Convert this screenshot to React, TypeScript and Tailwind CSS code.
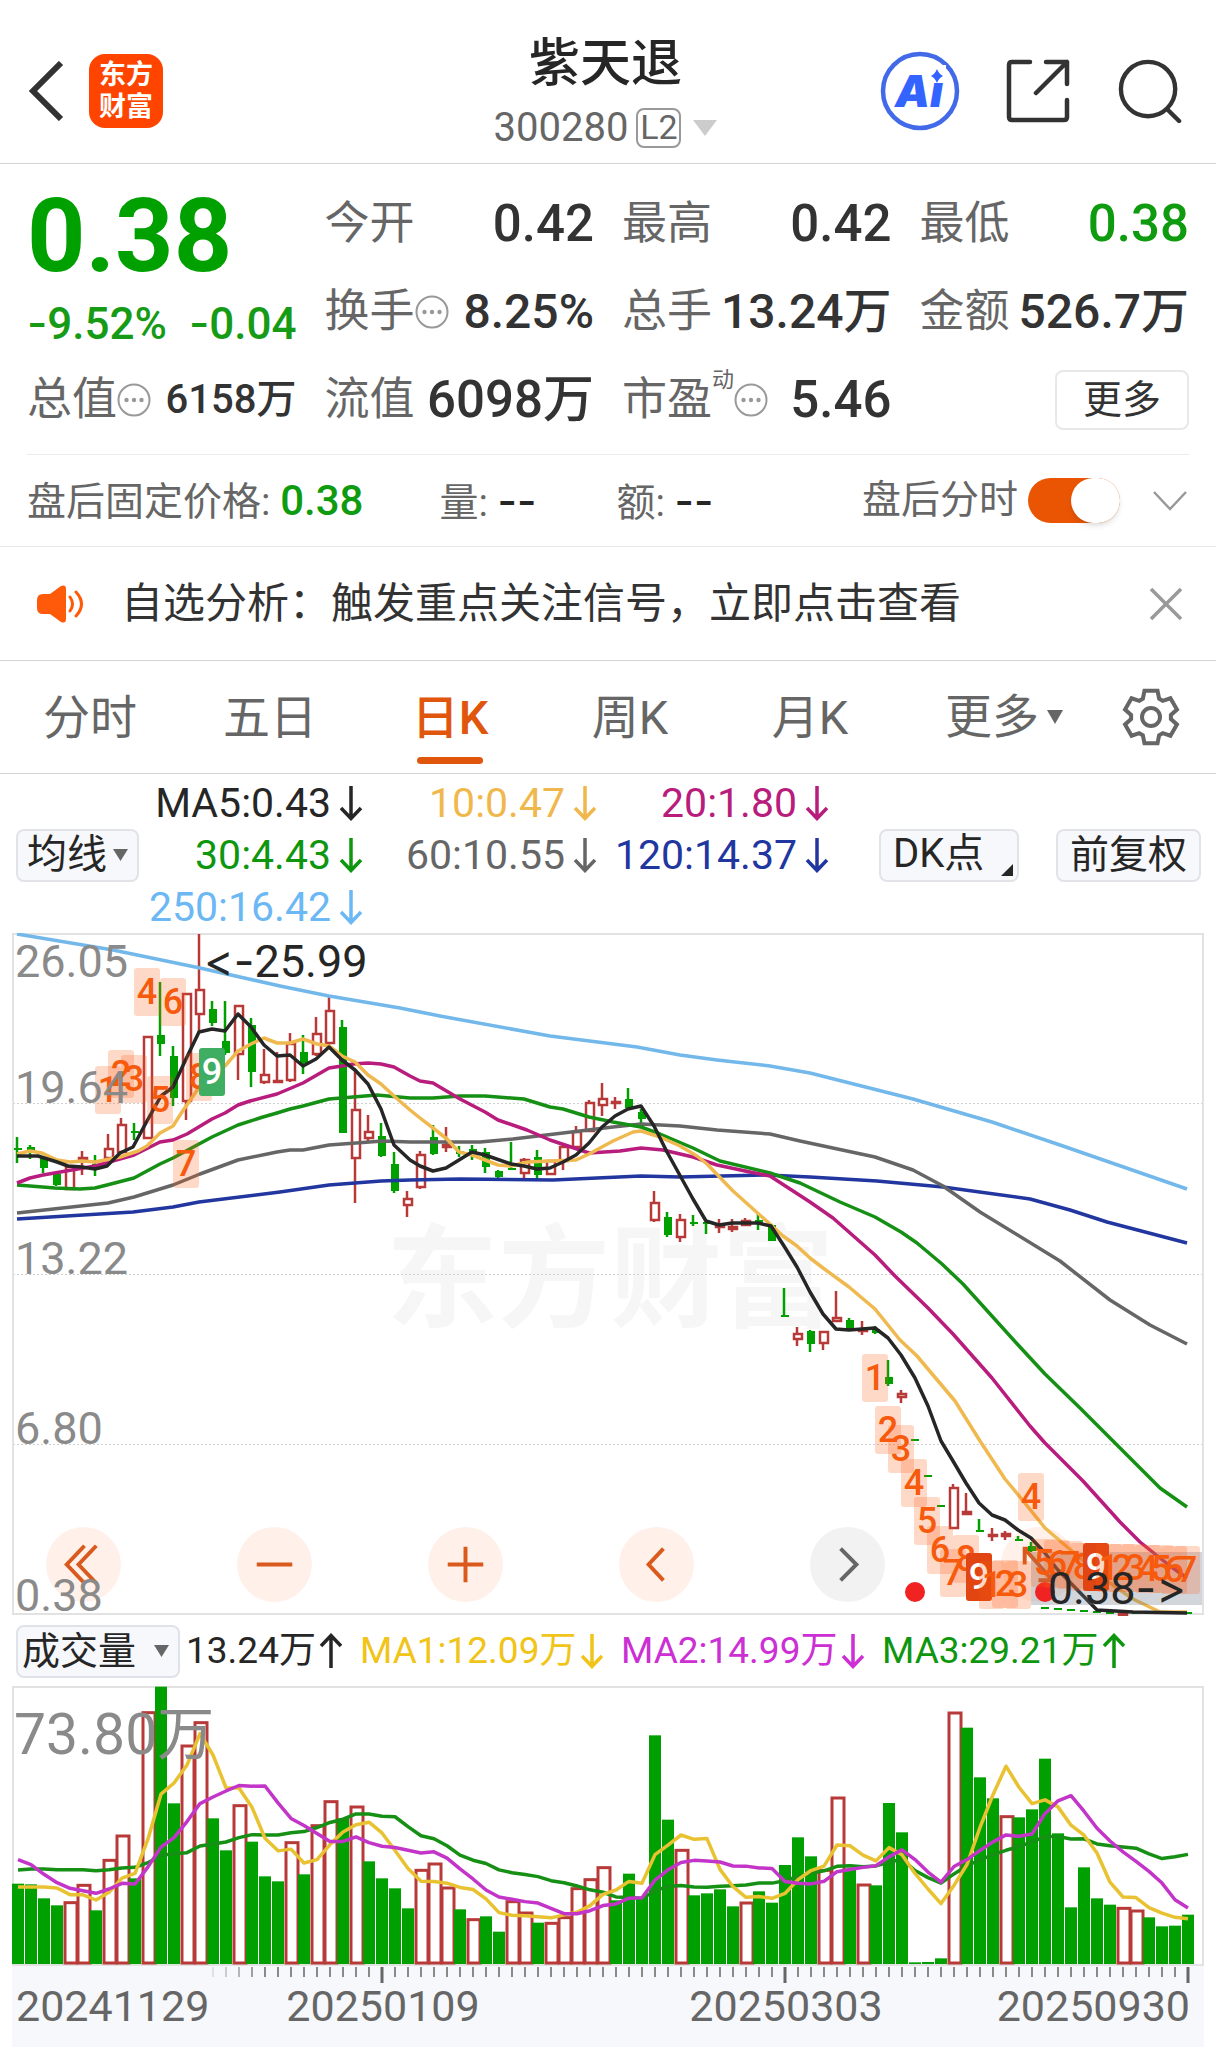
import { useState } from "react";

type Candle = [up: number, high: number, top: number, bottom: number, low: number];

// one row per trading day, y values on the chart's own scale
const candles: Candle[] = [
  [0, 204, 215, 217, 230], [0, 212, 214, 220, 226], [0, 225, 225, 235, 240], [0, 241, 241, 252, 253],
  [1, 233, 233, 257, 257], [1, 218, 224, 227, 242], [0, 222, 231, 233, 243], [1, 201, 215, 226, 227],
  [1, 185, 191, 220, 221], [0, 190, 198, 200, 207], [1, 103, 103, 206, 206], [0, 49, 102, 111, 123],
  [0, 113, 123, 165, 173], [1, 60, 60, 169, 187], [1, 1, 56, 82, 99], [0, 68, 76, 90, 93],
  [0, 68, 108, 120, 122], [1, 72, 72, 122, 147], [0, 85, 92, 139, 154], [1, 116, 141, 150, 151],
  [1, 119, 147, 149, 149], [1, 100, 110, 148, 149], [0, 102, 119, 130, 141], [1, 84, 100, 122, 123],
  [1, 64, 77, 111, 112], [0, 87, 94, 200, 200], [1, 136, 176, 226, 270], [1, 182, 198, 206, 208],
  [0, 190, 203, 223, 224], [0, 219, 231, 258, 260], [1, 258, 265, 273, 284], [1, 218, 221, 255, 256],
  [0, 192, 204, 221, 222], [1, 194, 211, 215, 219], [0, 213, 218, 221, 224], [0, 212, 216, 220, 227],
  [0, 215, 219, 234, 240], [0, 237, 238, 244, 246], [0, 209, 235, 237, 237], [1, 225, 226, 241, 245],
  [0, 217, 224, 242, 246], [1, 227, 227, 242, 242], [1, 212, 213, 229, 237], [1, 193, 198, 215, 216],
  [1, 167, 169, 199, 199], [1, 150, 165, 173, 183], [1, 164, 168, 171, 176], [0, 155, 166, 175, 176],
  [0, 176, 179, 186, 190], [1, 258, 269, 288, 289], [0, 279, 284, 302, 304], [1, 281, 286, 305, 309],
  [0, 282, 289, 291, 293], [0, 289, 289, 291, 301], [1, 286, 292, 295, 300], [1, 286, 293, 297, 299],
  [1, 285, 287, 293, 293], [0, 281, 287, 289, 297], [0, 292, 292, 308, 308], [0, 355, 382, 384, 384],
  [1, 394, 400, 407, 413], [0, 397, 398, 411, 419], [1, 398, 398, 411, 417], [1, 358, 384, 389, 389],
  [0, 385, 387, 396, 397], [1, 388, 396, 398, 402], [0, 393, 396, 400, 401], [0, 427, 444, 451, 453],
  [1, 457, 460, 465, 470], [0, 506, 506, 508, 508], [0, 542, 542, 544, 544], [0, 572, 572, 574, 574],
  [1, 551, 554, 596, 596], [1, 560, 578, 582, 582], [0, 586, 597, 599, 599], [1, 595, 601, 603, 608],
  [1, 598, 600, 604, 607], [0, 603, 606, 608, 608], [0, 609, 613, 618, 619], [0, 674, 674, 676, 676],
  [0, 675, 675, 677, 677], [0, 676, 676, 678, 678], [0, 677, 677, 679, 679], [0, 678, 678, 680, 680],
  [0, 679, 679, 681, 681], [1, 680, 680, 681, 681], [0, 679, 679, 681, 681], [0, 679, 679, 681, 681],
  [0, 679, 679, 681, 681], [0, 679, 679, 681, 681], [0, 679, 679, 681, 681],
];

const priceLines = [
  {
    color: "#73b8ea",
    points:
      "17,1 113,17 200,35 280,53 329,63 400,75 440,83 550,103 637,114 680,122 717,127 770,133 810,140 913,166 992,189 1060,212 1187,256",
  },
  {
    color: "#22369f",
    points:
      "17,286 133,279 173,274 199,269 280,259 329,252 381,248 410,247 460,246 553,247 641,243 680,244 767,242 810,244 877,248 943,254 1030,266 1070,277 1107,289 1187,310",
  },
  {
    color: "#666666",
    points:
      "17,280 108,270 134,264 173,252 200,241 238,227 277,219 290,217 303,217 329,212 383,208 410,209 480,209 513,206 613,194 641,191 680,193 717,197 770,201 800,208 875,224 913,237 943,253 980,279 1060,328 1110,367 1150,392 1187,411",
  },
  {
    color: "#159015",
    points:
      "17,252 30,253 55,255 80,256 95,255 107,252 134,245 160,231 173,225 212,204 225,198 238,192 263,184 277,180 290,176 303,173 329,166 377,162 410,165 433,165 460,163 485,163 524,166 550,174 563,176 589,184 613,189 641,194 660,201 693,215 720,228 770,240 800,250 840,269 875,284 901,299 917,310 942,331 963,351 1020,414 1045,441 1080,475 1160,555 1187,574",
  },
  {
    color: "#b81c7c",
    points:
      "17,250 30,245 43,242 95,233 134,222 160,209 173,207 187,201 212,186 225,180 238,172 250,168 277,161 303,150 329,135 342,133 353,131 368,130 381,131 394,134 410,143 420,148 433,150 460,166 485,179 498,187 527,197 550,207 589,220 620,218 641,215 663,217 693,224 717,232 750,239 770,243 810,269 833,285 875,322 895,343 928,375 953,401 992,445 1030,493 1045,510 1083,548 1120,589 1140,609 1170,633 1187,645",
  },
  {
    color: "#efb94f",
    points:
      "17,221 30,218 42,220 57,227 70,229 82,228 95,229 120,224 138,218 147,213 160,200 173,193 182,179 200,153 225,133 238,118 251,111 264,105 277,110 290,110 303,106 317,111 329,113 342,123 355,129 368,142 381,151 394,163 410,177 420,185 433,195 447,206 459,219 472,222 485,227 498,232 511,233 528,229 550,228 576,227 589,221 613,208 633,199 641,198 660,204 680,213 697,223 707,231 733,258 771,292 783,303 797,313 810,325 823,335 849,354 875,376 900,407 917,423 933,442 955,468 980,508 1005,546 1020,564 1045,595 1073,619 1110,650 1133,666 1160,679 1187,679",
  },
  {
    color: "#262626",
    points:
      "17,223 38,223 57,229 68,233 82,234 95,236 107,233 120,220 133,214 147,188 161,163 173,154 186,126 199,99 212,96 225,98 238,81 251,94 264,112 277,123 290,122 303,133 316,126 329,114 342,127 355,137 368,151 381,176 394,212 410,227 420,233 433,238 446,235 472,219 485,222 511,231 524,233 537,236 550,235 563,229 576,222 589,210 602,194 615,183 628,176 641,173 654,193 667,219 693,266 706,288 719,292 732,290 758,290 771,293 784,313 797,334 810,359 823,381 836,396 849,397 875,395 888,405 901,422 915,445 928,473 941,508 953,528 966,550 979,570 992,582 1005,587 1018,597 1031,605 1045,620 1057,636 1097,677 1133,679 1187,680",
  },
];

// nine-turn signals: digit, x, y, optional solid fill
const signals: [string, number, number, string?][] = [
  ["1", 95, 133], ["2", 108, 117], ["3", 121, 122], ["4", 134, 35], ["5", 147, 143],
  ["6", 160, 45], ["7", 173, 207], ["8", 186, 120], ["9", 199, 115, "#3fae62"],
  ["1", 862, 421], ["2", 875, 473], ["3", 888, 492], ["4", 901, 526], ["5", 914, 564],
  ["6", 927, 593], ["7", 940, 616], ["8", 953, 602], ["9", 966, 620, "#e04512"],
  ["1", 979, 628], ["2", 992, 627], ["3", 1005, 628], ["4", 1018, 540],
  ["5", 1031, 606], ["6", 1044, 607], ["7", 1057, 608], ["8", 1070, 610], ["9", 1083, 610, "#e04512"],
  ["1", 1096, 611], ["2", 1109, 611], ["3", 1122, 611], ["4", 1135, 612],
  ["5", 1148, 612], ["6", 1161, 613], ["7", 1174, 613],
];

// positive: up day, negative: down day
const volumes = [
  -241, -239, -197, -176, 187, 239, -161, 314, 387, -257, 757, -832, -482, 657, 727, -437, -341, 478, -367, -263,
  -248, 367, -269, 418, 490, -437, 474, -308, -257, -227, -167, 284, 303, 231, -164, 136, -143, -97, 190, 156,
  -124, 125, 142, 229, 256, 292, -191, -271, -201, -686, -433, 344, -206, -212, -224, -173, 186, -218, -184, -297,
  -380, -323, 284, 501, -286, 240, -236, -483, -395, -5, -6, -17, 756, -709, -560, -497, 445, -440, -464, -616,
  -392, -170, -290, -197, -178, 170, 162, -140, -113, -115, -148,
];

// averages of the first days need data from before the visible range
const volumeLines = [
  {
    color: "#159015",
    days: 20,
    lead: [282, 285, 285, 283, 283, 283, 280, 283, 288, 290, 304, 326, 331, 334, 354, 360, 366, 379, 388],
  },
  { color: "#e8c230", days: 5, lead: [231, 231, 231, 228] },
  { color: "#c335c8", days: 10, lead: [313, 298, 269, 244, 227, 220, 212, 225, 242] },
];

function averagePoints(days: number, lead: number[]) {
  return volumes
    .map((_, i) => {
      let avg = lead[i];
      if (i >= days - 1) {
        avg = volumes.slice(i - days + 1, i + 1).reduce((sum, v) => sum + Math.abs(v), 0) / days;
      }
      return `${18 + i * 13},${278 - avg / 3}`;
    })
    .join(" ");
}

function gearPoints() {
  const points: string[] = [];
  for (let k = 0; k < 6; k++) {
    for (const [r, offset] of [[20, -24], [27, -14], [27, 14], [20, 24]]) {
      const a = ((k * 60 + offset - 90) * Math.PI) / 180;
      points.push(`${29 + r * Math.cos(a)},${29 + r * Math.sin(a)}`);
    }
  }
  return points.join(" ");
}

function Arrow({ up = false }: { up?: boolean }) {
  return (
    <svg viewBox="0 0 24 36" className="w-6 h-9 shrink-0" fill="none" stroke="currentColor" strokeWidth="3.5">
      {up ? <path d="M12 35V3M2 13L12 2.5L22 13" /> : <path d="M12 1V33M2 23L12 33.5L22 23" />}
    </svg>
  );
}

function Info() {
  return (
    <svg viewBox="0 0 34 34" className="w-[34px] h-[34px] shrink-0" fill="none" stroke="#999" strokeWidth="2">
      <circle cx="17" cy="17" r="15.5" />
      <g fill="#999" stroke="none">
        <circle cx="9.5" cy="17" r="2.2" />
        <circle cx="17" cy="17" r="2.2" />
        <circle cx="24.5" cy="17" r="2.2" />
      </g>
    </svg>
  );
}

function Triangle({ className }: { className: string }) {
  return (
    <svg viewBox="0 0 16 14" className={className} fill="currentColor" preserveAspectRatio="none">
      <path d="M0 0H16L8 14Z" />
    </svg>
  );
}

function Header() {
  return (
    <header className="grid grid-cols-[1fr_auto_1fr] items-center h-[164px] border-b border-[#d4d4d4] pl-[27px] pr-8">
      <div className="flex items-center gap-6 pt-[18px]">
        <button aria-label="返回">
          <svg viewBox="0 0 38 60" className="w-[38px] h-15" fill="none" stroke="#333" strokeWidth="6">
            <path d="M34 2L6 30L34 58" />
          </svg>
        </button>
        <a
          href="#home"
          className="flex flex-col items-center justify-center w-[74px] h-[74px] rounded-2xl bg-[#ff4400] text-white text-[27px] leading-8 font-bold"
        >
          <span>东方</span>
          <span>财富</span>
        </a>
      </div>
      <div className="flex flex-col items-center pt-7">
        <h1 className="text-[51px] leading-[64px] font-medium text-[#262626]">紫天退</h1>
        <button className="flex items-center h-16 text-[40px] text-[#666]">
          300280
          <span className="flex items-center justify-center w-[45px] h-10 ml-2 border-2 border-[#999] rounded-lg text-[34px]">
            L2
          </span>
          <Triangle className="w-6 h-4 ml-3 text-[#ccc]" />
        </button>
      </div>
      <div className="flex items-center justify-end gap-[46px] pt-[18px]">
        <button aria-label="AI助手">
          <svg viewBox="0 0 80 80" className="w-20 h-20">
            <circle cx="40" cy="40" r="37" fill="none" stroke="#4169e8" strokeWidth="4.5" />
            <text
              x="15"
              y="56"
              fontFamily="Inter, sans-serif"
              fontSize="44"
              fontWeight="900"
              fontStyle="italic"
              fill="#3464ff"
            >
              Ai
            </text>
            <path d="M46 14H66V32H46Z" fill="#fff" />
            <path d="M57 18Q59 23 63 25Q59 27 57 32Q55 27 51 25Q55 23 57 18Z" fill="#3464ff" />
          </svg>
        </button>
        <button aria-label="分享">
          <svg
            viewBox="0 0 64 64"
            className="w-16 h-16"
            fill="none"
            stroke="#333"
            strokeWidth="4.5"
            strokeLinecap="round"
            strokeLinejoin="round"
          >
            <path d="M24 3H6Q3 3 3 6V58Q3 61 6 61H58Q61 61 61 58V41" />
            <path d="M40 3H61V25M61 3L30 34" />
          </svg>
        </button>
        <button aria-label="搜索">
          <svg viewBox="0 0 68 66" className="w-[68px] h-16" fill="none" stroke="#333" strokeWidth="4.5" strokeLinecap="round">
            <circle cx="32" cy="31" r="28" />
            <path d="M52 52L64 64" />
          </svg>
        </button>
      </div>
    </header>
  );
}

function Cell({ label, value, size, color = "text-[#333]", info = false, sup = "" }: {
  label: string;
  value: string;
  size: string;
  color?: string;
  info?: boolean;
  sup?: string;
}) {
  return (
    <div className="flex items-center justify-between h-[88px] whitespace-nowrap">
      <dt className="flex items-center text-[45px] text-[#666]">
        {label}
        {sup && <sup className="text-[22px] -top-5">{sup}</sup>}
        {info && <Info />}
      </dt>
      <dd className={`font-medium ${size} ${color}`}>{value}</dd>
    </div>
  );
}

function Quote() {
  return (
    <section className="px-[27px]">
      <dl className="grid grid-cols-4 gap-x-7 pt-4 pb-[10px] border-b border-[#ececec]">
        <div className="row-span-2 text-[#00a000]">
          <dt className="sr-only">最新价</dt>
          <dd className="h-[112px] text-[102px] leading-[112px] font-bold">0.38</dd>
          <dd className="flex items-center justify-between h-[62px] text-[44px] font-medium text-[#159b15]">
            <span>
              <span className="font-['Inter']">-</span>9.52%
            </span>
            <span>
              <span className="font-['Inter']">-</span>0.04
            </span>
          </dd>
        </div>
        <Cell label="今开" value="0.42" size="text-[51px]" />
        <Cell label="最高" value="0.42" size="text-[51px]" />
        <Cell label="最低" value="0.38" size="text-[51px]" color="text-[#0f9b0f]" />
        <Cell label="换手" value="8.25%" size="text-[48px]" info />
        <Cell label="总手" value="13.24万" size="text-[48px]" />
        <Cell label="金额" value="526.7万" size="text-[48px]" />
        <Cell label="总值" value="6158万" size="text-[40px]" info />
        <Cell label="流值" value="6098万" size="text-[51px]" />
        <Cell label="市盈" value="5.46" size="text-[51px]" info sup="动" />
        <div className="flex items-center justify-end">
          <button className="w-[134px] h-[60px] border-2 border-[#e8e8e8] rounded-lg text-[39px] leading-none text-[#333]">
            更多
          </button>
        </div>
      </dl>
    </section>
  );
}

function AfterHours() {
  const [on, setOn] = useState(true);
  return (
    <section className="flex items-center h-[92px] pl-[27px] pr-[28px] border-b border-[#e8e8e8] text-[39px] text-[#666] whitespace-nowrap">
      <p>
        盘后固定价格: <span className="text-[42px] text-[#0f9b0f] font-medium">0.38</span>
      </p>
      <p className="ml-[76px]">
        量: <span className="font-['Inter'] text-[42px] font-medium text-[#262626]">--</span>
      </p>
      <p className="ml-[80px]">
        额: <span className="font-['Inter'] text-[42px] font-medium text-[#262626]">--</span>
      </p>
      <label className="flex items-center gap-[10px] ml-auto">
        盘后分时
        <input
          type="checkbox"
          role="switch"
          checked={on}
          onChange={() => setOn(!on)}
          className="appearance-none w-[92px] h-[45px] rounded-full bg-[#ccc] checked:bg-[#ea5504] before:block before:w-[49px] before:h-[45px] before:rounded-full before:bg-white before:shadow-md checked:before:ml-[43px]"
        />
      </label>
      <button aria-label="展开" className="ml-8">
        <svg viewBox="0 0 36 22" className="w-9 h-[22px]" fill="none" stroke="#999" strokeWidth="2.5">
          <path d="M2 2L18 19L34 2" />
        </svg>
      </button>
    </section>
  );
}

function Notice() {
  return (
    <section className="flex items-center h-[114px] pl-[37px] pr-[32px] border-b border-[#d4d4d4]">
      <svg viewBox="0 0 48 40" className="w-12 h-10 shrink-0">
        <path d="M6 10H13L24 2Q29 0 29 5V35Q29 40 24 38L13 30H6Q0 30 0 24V16Q0 10 6 10Z" fill="#ff5a0a" />
        <path
          d="M33 13Q38 20 33 27M39 8Q50 20 39 32"
          fill="none"
          stroke="#ff5a0a"
          strokeWidth="3"
          strokeLinecap="round"
        />
      </svg>
      <a href="#analysis" className="ml-9 text-[42px] text-[#333] whitespace-nowrap">
        自选分析：触发重点关注信号，立即点击查看
      </a>
      <button aria-label="关闭" className="ml-auto">
        <svg viewBox="0 0 36 36" className="w-9 h-9" fill="none" stroke="#999" strokeWidth="3.5">
          <path d="M3 3L33 33M33 3L3 33" />
        </svg>
      </button>
    </section>
  );
}

function Tabs() {
  const [active, setActive] = useState("日K");
  return (
    <nav className="flex items-center h-[113px] pr-[36px] border-b border-[#d4d4d4] text-[47px] text-[#666]">
      {["分时", "五日", "日K", "周K", "月K"].map((tab) => (
        <button
          key={tab}
          onClick={() => setActive(tab)}
          className={`flex flex-col items-center w-[180px] h-full pt-[21px] ${tab === active ? "text-[#e0560d] font-medium" : ""}`}
        >
          <span className="leading-[72px]">{tab}</span>
          {tab === active && <span className="w-[66px] h-[7px] mt-[3px] rounded-full bg-[#e0560d]" />}
        </button>
      ))}
      <button className="flex items-center ml-[45px] gap-2">
        更多
        <Triangle className="w-4 h-[14px]" />
      </button>
      <button aria-label="设置" className="ml-auto">
        <svg viewBox="0 0 58 58" className="w-[58px] h-[58px]" fill="none" stroke="#666" strokeWidth="4">
          <polygon points={gearPoints()} />
          <circle cx="29" cy="29" r="9" />
        </svg>
      </button>
    </nav>
  );
}

const averages = [
  { text: "MA5:0.43", color: "text-[#262626]" },
  { text: "10:0.47", color: "text-[#f0b84c]" },
  { text: "20:1.80", color: "text-[#b81c7c]" },
  { text: "30:4.43", color: "text-[#0f960f]" },
  { text: "60:10.55", color: "text-[#666]" },
  { text: "120:14.37", color: "text-[#22369f]" },
  { text: "250:16.42", color: "text-[#6cb8f5]" },
];

function AverageBar() {
  return (
    <section className="flex items-center h-[159px] pt-[3px] pl-4 pr-[15px]">
      <button className="flex items-center justify-center gap-[6px] w-[123px] h-[53px] border-2 border-[#e2e3e8] rounded-lg bg-[#f7f8fb] text-[40px] leading-none text-[#262626]">
        均线
        <Triangle className="w-[15px] h-3 text-[#666]" />
      </button>
      <ul className="grid grid-cols-[224px_234px_232px] text-[41px] leading-[52px]">
        {averages.map(({ text, color }) => (
          <li key={text} className={`flex items-center justify-end gap-2 ${color}`}>
            {text}
            <Arrow />
          </li>
        ))}
      </ul>
      <button className="flex items-end justify-between w-[140px] h-[53px] ml-[50px] pl-3 pr-1 pb-1 border-2 border-[#e2e3e8] rounded-lg bg-[#f7f8fb] text-[40px] leading-[45px] text-[#262626]">
        DK点
        <svg viewBox="0 0 12 12" className="w-3 h-3">
          <path d="M12 0V12H0Z" fill="#262626" />
        </svg>
      </button>
      <button className="w-[145px] h-[53px] ml-auto border-2 border-[#e2e3e8] rounded-lg bg-[#f7f8fb] text-[39px] leading-none text-[#262626]">
        前复权
      </button>
    </section>
  );
}

const chartButtons = [
  { label: "最早", icon: "M39 19L21 38L39 57M51 19L33 38L51 57" },
  { label: "缩小", icon: "M20 38H56" },
  { label: "放大", icon: "M20 38H56M38 20V56" },
  { label: "向左", icon: "M45 22L30 38L45 54" },
  { label: "向右", icon: "M31 22L47 38L31 54" },
  { label: "全屏", icon: "M24 38V22H38M24 22L52 54M38 54H52V40" },
];

function PriceChart() {
  return (
    <section className="relative">
      <div className="absolute left-[46px] bottom-[14px] flex gap-[116px]">
        {chartButtons.map(({ label, icon }) => (
          <button
            key={label}
            aria-label={label}
            className={label === "向右" ? "rounded-full bg-[#f2f2f2] text-[#666]" : "rounded-full bg-[#fff1ea] text-[#d95a1c]"}
          >
            <svg viewBox="0 0 76 76" className="w-[75px] h-[75px]" fill="none" stroke="currentColor" strokeWidth="4">
              <path d={icon} />
            </svg>
          </button>
        ))}
      </div>
      <svg viewBox="0 0 1216 683" className="relative block w-full h-auto pointer-events-none">
        <text x="386" y="386" fontSize="112" fontWeight="700" fill="#000" fillOpacity="0.035">
          东方财富
        </text>
        <g stroke="#cfcfcf" strokeDasharray="2 2">
          <path d="M13 170.5H1202M13 341.5H1202M13 511.5H1202" />
        </g>
        <rect x="13" y="1" width="1190" height="680" fill="none" stroke="#e2e2e2" strokeWidth="2" />

        {candles.map(([up, high, top, bottom, low], i) => {
          const x = 17 + i * 13;
          const color = up ? "#b83a38" : "#00a000";
          return (
            <g key={i} stroke={color} strokeWidth="2.5">
              <path d={`M${x} ${high}V${top}M${x} ${bottom}V${low}`} />
              {up ? (
                <rect x={x - 3} y={top + 1} width="8" height={Math.max(bottom - top - 2, 1)} fill="#fff" />
              ) : (
                <rect x={x - 3} y={top} width="8" height={bottom - top} fill={color} stroke="none" />
              )}
            </g>
          );
        })}

        {priceLines.map(({ color, points }) => (
          <polyline key={color} points={points} fill="none" stroke={color} strokeWidth="3.5" strokeLinejoin="round" />
        ))}

        <rect x="1031" y="619" width="171" height="53" fill="#6b7888" fillOpacity="0.3" />
        <circle cx="915" cy="659" r="10" fill="#f02222" />
        <circle cx="1045" cy="659" r="10" fill="#f02222" />

        {signals.map(([digit, x, y, fill], i) => (
          <g key={i}>
            <rect x={x} y={y} width="26" height="48" rx="3" fill={fill ?? "#ff5a10"} fillOpacity={fill ? 1 : 0.23} />
            <text
              x={x + 13}
              y={y + 36}
              fontSize="36"
              fontWeight="500"
              textAnchor="middle"
              fill={fill ? "#fff" : "#f65a0c"}
            >
              {digit}
            </text>
          </g>
        ))}

        <g fontSize="45" fill="#8a8a8a">
          <text x="15" y="44">26.05</text>
          <text x="15" y="170">19.64</text>
          <text x="15" y="341">13.22</text>
          <text x="15" y="511">6.80</text>
          <text x="15" y="678">0.38</text>
        </g>
        <g fontSize="45" fill="#262626" className="[font-variant-ligatures:none] [font-feature-settings:'calt'_0]">
          <text x="204" y="44">
            <tspan fontFamily="Inter">&lt;-</tspan>25.99
          </text>
          <text x="1186" y="671" textAnchor="end">
            0.38<tspan fontFamily="Inter">-&gt;</tspan>
          </text>
        </g>
      </svg>
    </section>
  );
}

const volumeStats = [
  { text: "13.24万", color: "text-[#262626]", up: true, width: "w-[157px]" },
  { text: "MA1:12.09万", color: "text-[#f0c419]", up: false, width: "w-[244px]" },
  { text: "MA2:14.99万", color: "text-[#cc2fd4]", up: false, width: "w-[244px]" },
  { text: "MA3:29.21万", color: "text-[#0f960f]", up: true, width: "w-[244px]" },
];

function VolumeBar() {
  return (
    <section className="flex items-center h-[70px] pl-4 whitespace-nowrap">
      <button className="flex items-center justify-between w-[164px] h-[53px] pl-1 pr-[9px] border-2 border-[#dfe2e8] rounded-lg bg-[#f7f8fb] text-[38px] leading-none text-[#262626]">
        成交量
        <Triangle className="w-[15px] h-3 text-[#666]" />
      </button>
      <ul className="flex gap-[17px] ml-[6px] text-[37px]">
        {volumeStats.map(({ text, color, up, width }) => (
          <li key={text} className={`flex items-center justify-between ${width} ${color}`}>
            {text}
            <Arrow up={up} />
          </li>
        ))}
      </ul>
    </section>
  );
}

function VolumeChart() {
  return (
    <svg viewBox="0 0 1216 361" className="block w-full h-auto">
      <rect x="12" y="280" width="1192" height="81" fill="#f7f8fb" />
      <rect x="13" y="1" width="1190" height="278" fill="none" stroke="#e2e2e2" strokeWidth="2" />

      {volumes.map((v, i) => {
        const x = 18 + i * 13;
        const h = Math.abs(v) / 3;
        return v > 0 ? (
          <rect key={i} x={x - 5} y={279 - h} width="12" height={h - 2} fill="#fff" stroke="#b83a38" strokeWidth="3" />
        ) : (
          <rect key={i} x={x - 6} y={278 - h} width="12" height={h} fill="#00a000" />
        );
      })}
      {volumeLines.map(({ color, days, lead }) => (
        <polyline
          key={days}
          points={averagePoints(days, lead)}
          fill="none"
          stroke={color}
          strokeWidth="3.5"
          strokeLinejoin="round"
        />
      ))}
      <text x="14" y="68" fontSize="57" fill="#8a8a8a">
        73.80万
      </text>

      {volumes.map((_, i) => {
        const major = i === 28 || i === 59 || i === 90;
        return (
          i > 14 && (
            <path
              key={i}
              d={`M${18 + i * 13} 281V${major ? 297 : 291}`}
              stroke="#666"
              strokeWidth={major ? 3 : 1.5}
              opacity={Math.min(1, (i - 14) / 5)}
            />
          )
        );
      })}
      <g fontSize="43" fill="#666">
        <text x="16" y="335">20241129</text>
        <text x="383" y="335" textAnchor="middle">20250109</text>
        <text x="786" y="335" textAnchor="middle">20250303</text>
        <text x="1190" y="335" textAnchor="end">20250930</text>
      </g>
    </svg>
  );
}

export default function App() {
  return (
    <main className="bg-white font-['Roboto','Noto_Sans_CJK_SC',sans-serif]">
      <Header />
      <Quote />
      <AfterHours />
      <Notice />
      <Tabs />
      <AverageBar />
      <PriceChart />
      <VolumeBar />
      <VolumeChart />
    </main>
  );
}
